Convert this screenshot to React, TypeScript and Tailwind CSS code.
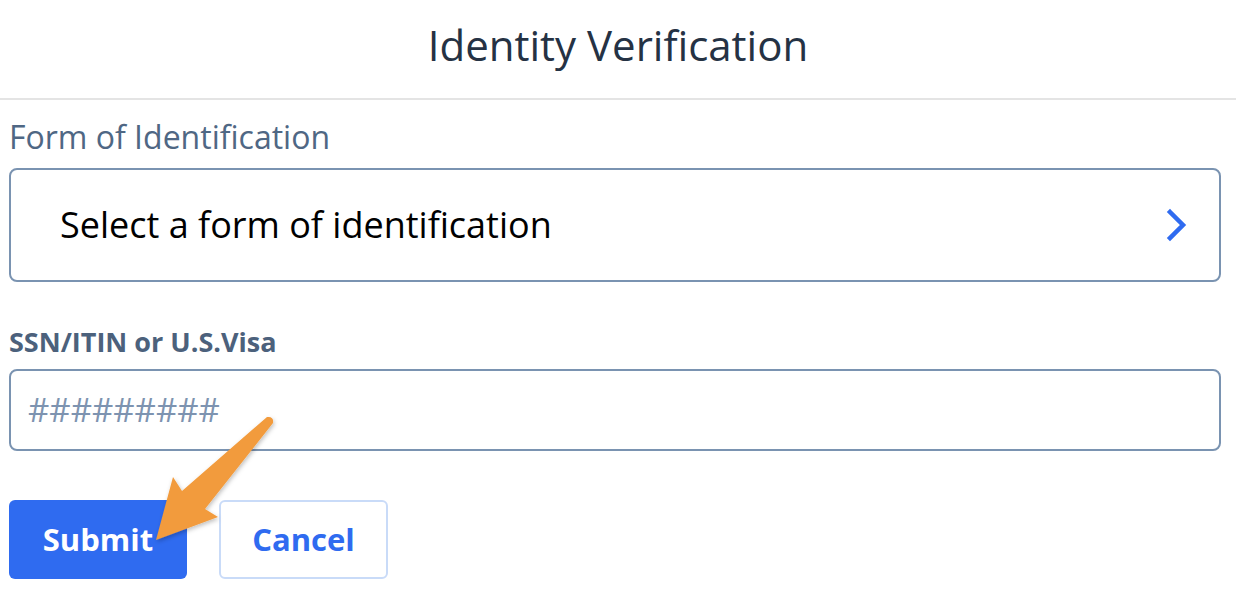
import React from "react";

function ChevronRight() {
  return (
    <svg width="22" height="34" viewBox="0 0 22 34" fill="none">
      <path d="M4 4l13 13-13 13" stroke="#2f6bf0" strokeWidth="4.5" strokeLinecap="square" strokeLinejoin="miter" />
    </svg>
  );
}

function Arrow() {
  return (
    <svg
      className="pointer-events-none absolute left-0 top-0"
      width="1236"
      height="594"
      viewBox="0 0 1236 594"
    >
      <defs>
        <filter id="sh" x="-20%" y="-20%" width="140%" height="140%">
          <feDropShadow dx="1" dy="2" stdDeviation="2" floodColor="#000" floodOpacity="0.25" />
        </filter>
      </defs>
      <path
        d="M156 540 L218 517 L205 509 L273 423 Q274 416 267 417 L182 491 L173 477 Z"
        fill="#f29b3c"
        filter="url(#sh)"
      />
    </svg>
  );
}

export default function App() {
  return (
    <div className="relative h-[594px] w-[1236px] overflow-hidden bg-white font-['Open_Sans',sans-serif]">
      <header className="flex h-[100px] items-center justify-center border-b-2 border-[#e4e4e4] pb-[8px]">
        <h1 className="text-[42px] leading-none text-[#253244]">Identity Verification</h1>
      </header>

      <main className="pl-[9px] pr-[15px]">
        <label className="mt-[17px] block text-[32px] leading-[40px] text-[#4f6784]">
          Form of Identification
        </label>
        <button className="mt-[11px] flex h-[114px] w-full items-center justify-between rounded-[8px] border-2 border-[#7a93b1] pl-[49px] pr-[31px] text-left">
          <span className="text-[36px] text-black">Select a form of identification</span>
          <ChevronRight />
        </button>

        <label className="mt-[42px] block text-[27px] font-bold leading-[36px] text-[#4c617c]">
          SSN/ITIN or U.S.Visa
        </label>
        <div className="mt-[9px] flex h-[82px] w-full items-center rounded-[8px] border-2 border-[#7a93b1] px-[17px]">
          <input
            className="w-full bg-transparent text-[33px] text-[#7d93b0] outline-none placeholder:text-[#7d93b0]"
            placeholder="#########"
          />
        </div>

        <div className="mt-[49px] flex gap-[32px]">
          <button className="h-[79px] w-[178px] rounded-[6px] bg-[#2f6bf0] text-[31px] font-bold text-white">
            Submit
          </button>
          <button className="h-[79px] w-[169px] rounded-[6px] border-2 border-[#c9dbf8] bg-white text-[31px] font-bold text-[#2f6bf0]">
            Cancel
          </button>
        </div>
      </main>

      <Arrow />
    </div>
  );
}
